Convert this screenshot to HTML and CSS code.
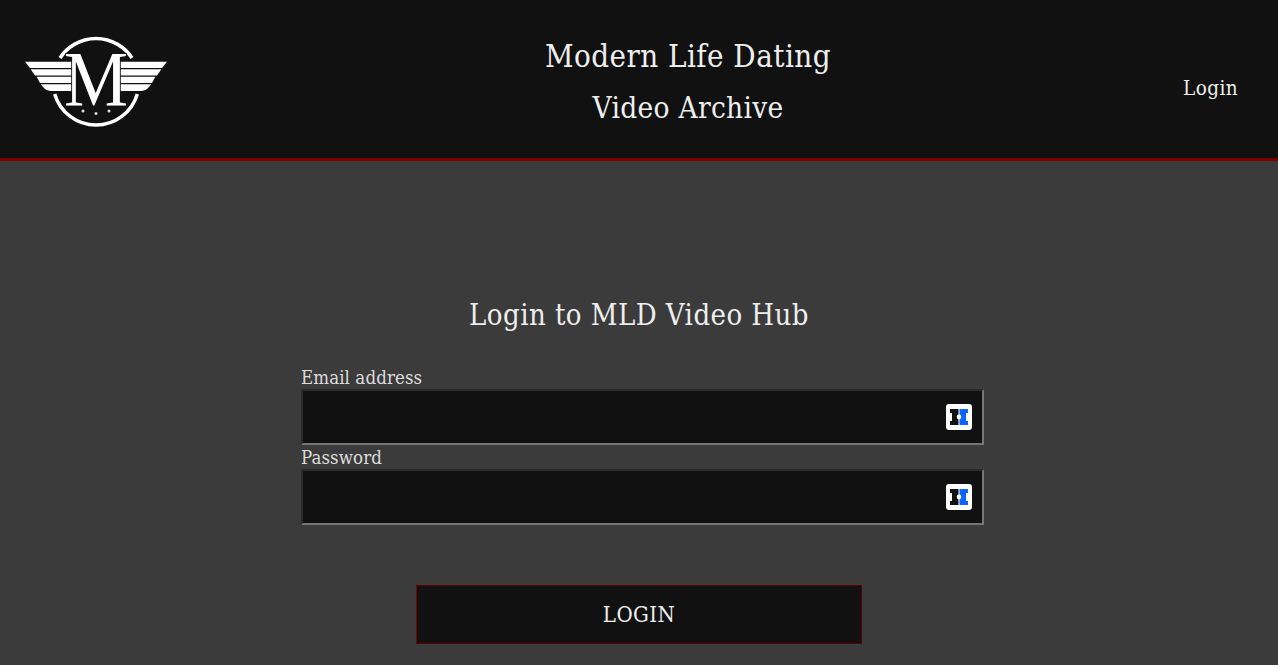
FILE: index.html
```html
<!DOCTYPE html>
<html lang="en">
<head>
<meta charset="utf-8">
<title>MLD Video Hub</title>
<link rel="stylesheet" href="styles.css">
</head>
<body>
<header class="site-header">
  <a class="logo" href="#" aria-label="Modern Life Dating">
    <svg class="logo-svg" viewBox="0 0 144 90" width="144" height="90">
      <path class="ring" d="M36 21 A43 43 0 0 1 108 21"/>
      <path class="ring" d="M30.700 57 A43 43 0 0 0 113.300 57"/>
      <path class="wing" d="M1 24.700H52V31H6Z"/>
      <path class="wing" d="M6.700 32.300H52V38.500H11Z"/>
      <path class="wing" d="M12.700 39.800H52V46H16Z"/>
      <path class="wing" d="M16.700 47.300H52V54H28Q22 54 19 50Z"/>
      <path class="wing" d="M143 24.700H92V31H138Z"/>
      <path class="wing" d="M137.300 32.300H92V38.500H133Z"/>
      <path class="wing" d="M131.300 39.800H92V46H128Z"/>
      <path class="wing" d="M127.300 47.300H92V54H116Q122 54 125 50Z"/>
      <text class="logo-m" x="72" y="68" text-anchor="middle" textLength="64" lengthAdjust="spacingAndGlyphs">M</text>
      <circle class="star" cx="59" cy="74" r="1.500"/>
      <circle class="star" cx="72" cy="76.500" r="1.500"/>
      <circle class="star" cx="85" cy="74" r="1.500"/>
    </svg>
  </a>
  <div class="titles">
    <h1 class="title title-main">Modern Life Dating</h1>
    <h2 class="title title-sub">Video Archive</h2>
  </div>
  <nav class="nav"><a class="nav-link" href="#">Login</a></nav>
</header>
<main class="main">
  <h3 class="form-title">Login to MLD Video Hub</h3>
  <form class="form">
    <label class="label" for="email">Email address</label>
    <div class="field">
      <input class="input" id="email" type="email">
      <svg class="pm-icon" viewBox="0 0 26 26" width="26" height="26">
        <rect class="pm-bg" width="26" height="26" rx="3"/>
        <path class="pm-dark" d="M4 5H12.500V10.600A2.500 2.500 0 0 0 12.500 15.400V21H4V17H6V9H4Z"/>
        <path class="pm-blue" d="M22 5H13.500V10.600A2.500 2.500 0 0 1 13.500 15.400V21H22V17H20V9H22Z"/>
      </svg>
    </div>
    <label class="label" for="password">Password</label>
    <div class="field">
      <input class="input" id="password" type="password">
      <svg class="pm-icon" viewBox="0 0 26 26" width="26" height="26">
        <rect class="pm-bg" width="26" height="26" rx="3"/>
        <path class="pm-dark" d="M4 5H12.500V10.600A2.500 2.500 0 0 0 12.500 15.400V21H4V17H6V9H4Z"/>
        <path class="pm-blue" d="M22 5H13.500V10.600A2.500 2.500 0 0 1 13.500 15.400V21H22V17H20V9H22Z"/>
      </svg>
    </div>
    <button class="submit" type="button">LOGIN</button>
  </form>
</main>
</body>
</html>
```
FILE: styles.css
```css
* { box-sizing: border-box; }
html, body { margin: 0; height: 100%; overflow: hidden; }
body {
  background: #3b3b3b;
  color: #eeeeee;
  font-family: "DejaVu Serif Condensed", "DejaVu Serif", serif;
}
.site-header {
  display: grid;
  grid-template-columns: 1fr auto 1fr;
  align-items: center;
  height: 161px;
  padding: 0 40px 0 24px;
  background: #111111;
  border-bottom: 3px solid #7d0000;
}
.logo { display: flex; justify-self: start; margin-top: 6px; }
.logo-svg { display: block; overflow: visible; }
.ring { fill: none; stroke: #fff; stroke-width: 3.500; }
.wing { fill: #fff; }
.logo-m { fill: #fff; stroke: #111; stroke-width: 2; paint-order: stroke; font-family: "Liberation Serif", serif; font-size: 78px; }
.star { fill: #ddd; }
.titles { text-align: center; padding: 5px 0 0 114px; }
.title { margin: 0; font-weight: 400; line-height: 52px; color: #eee; }
.title-main { font-size: 31px; letter-spacing: 0.45px; }
.title-sub { font-size: 29.500px; letter-spacing: 0.300px; }
.nav { justify-self: end; margin-top: 18px; }
.nav-link { color: #eee; text-decoration: none; font-size: 20.500px; letter-spacing: 0.400px; }
.main { display: flex; flex-direction: column; align-items: center; }
.form-title { margin: 134px 0 0; font-weight: 400; font-size: 29px; letter-spacing: 0.450px; line-height: 40px; color: #eee; }
.form { width: 683px; margin-top: 30px; margin-left: 7px; display: flex; flex-direction: column; }
.label { font-size: 18.500px; letter-spacing: 0.100px; line-height: 26px; height: 24px; color: #ddd; }
.field { position: relative; height: 56px; }
.input {
  display: block;
  width: 100%;
  height: 56px;
  background: #111111;
  border: 2px solid #767676;
  border-color: #2a2a2a #767676 #767676 #2a2a2a;
  color: #eee;
}
.pm-icon { position: absolute; right: 12px; top: 15px; }
.pm-bg { fill: #fff; }
.pm-dark { fill: #111; }
.pm-blue { fill: #0a66ff; }
.submit {
  align-self: center;
  width: 446px;
  height: 59px;
  margin: 60px 0 0 -7px;
  background: #111111;
  border: 1px solid #5a0000;
  border-left-color: #7d0000;
  color: #eee;
  font-family: inherit;
  font-size: 22px;
  letter-spacing: 0.400px;
}
```
